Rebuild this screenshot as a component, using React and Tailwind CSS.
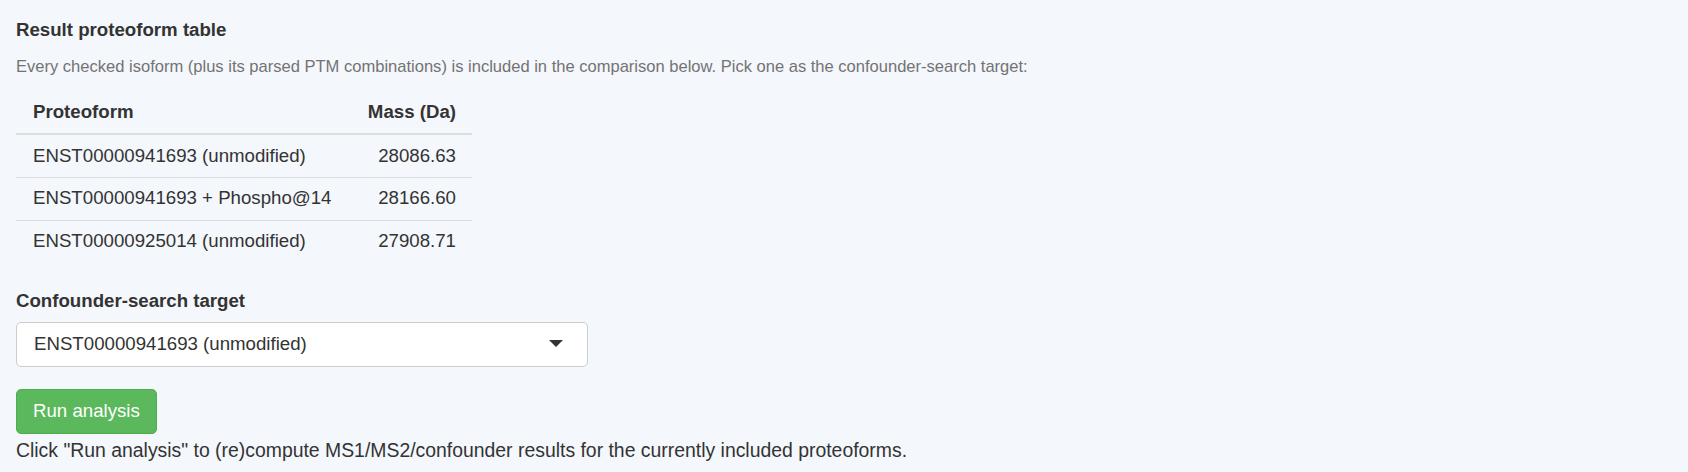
const rows = [
  { name: "ENST00000941693 (unmodified)", mass: "28086.63" },
  { name: "ENST00000941693 + Phospho@14", mass: "28166.60" },
  { name: "ENST00000925014 (unmodified)", mass: "27908.71" },
];

const App = () => (
  <div
    className="min-h-screen w-full bg-[#f4f7fc] px-4 pt-[17px] text-[#333] text-[18.67px] leading-[26.67px]"
    style={{ fontFamily: '"Liberation Sans", Arial, Helvetica, sans-serif' }}
  >
    <div className="font-bold">Result proteoform table</div>
    <p className="mt-3 text-[16.55px] leading-[22.86px] text-[#737373]">
      Every checked isoform (plus its parsed PTM combinations) is included in the comparison below. Pick one as the
      confounder-search target:
    </p>

    <table className="mt-[12px] w-[456px] border-collapse">
      <thead>
        <tr className="border-b-2 border-[#ddd]">
          <th className="px-[17px] py-2 text-left font-bold">Proteoform</th>
          <th className="px-4 py-2 text-right font-bold">Mass (Da)</th>
        </tr>
      </thead>
      <tbody>
        {rows.map((r, i) => (
          <tr key={r.name} className={i < rows.length - 1 ? "border-b border-[#ddd]" : ""}>
            <td className="px-[17px] py-[7.5px] text-left">{r.name}</td>
            <td className="px-4 py-[7.5px] text-right">{r.mass}</td>
          </tr>
        ))}
      </tbody>
    </table>

    <div className="mt-[26px] font-bold">Confounder-search target</div>
    <div className="mt-[7px] flex h-[45px] w-[572px] items-center justify-between rounded-[5px] border border-[#ccc] bg-white pl-[17px] pr-[24px]">
      <span>ENST00000941693 (unmodified)</span>
      <svg width="14" height="7" viewBox="0 0 14 7" className="mt-[-2px]">
        <path d="M0 0 L14 0 L7 7 Z" fill="#333" />
      </svg>
    </div>

    <button className="mt-[22px] h-[45px] rounded-[5px] border border-[#4cae4c] bg-[#5cb85c] px-4 text-white">
      Run analysis
    </button>
    <div className="mt-[3px] text-[19.4px]">
      Click "Run analysis" to (re)compute MS1/MS2/confounder results for the currently included proteoforms.
    </div>
  </div>
);

export default App;
